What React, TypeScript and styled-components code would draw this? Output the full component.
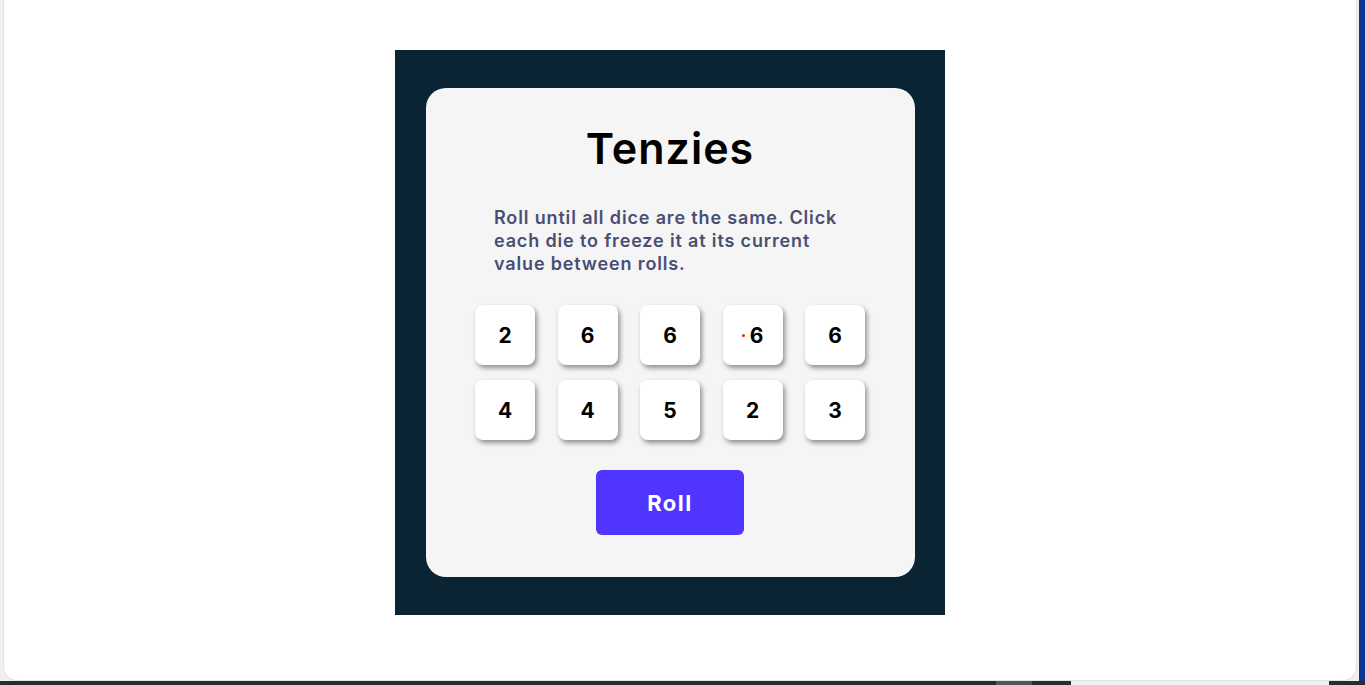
import React from "react";
import styled, { createGlobalStyle } from "styled-components";

const GlobalStyle = createGlobalStyle`
  html, body {
    margin: 0;
    padding: 0;
    background: #2b2b2b;
  }
  * {
    box-sizing: border-box;
  }
`;

const Screen = styled.div`
  display: flex;
  flex-direction: column;
  height: 685px;
  overflow: hidden;
`;

const Window = styled.div`
  flex: 1;
  display: flex;
  background: #f0f0f0;
`;

const Viewport = styled.div`
  flex: 1;
  margin: 0 2px 0 3px;
  background: #ffffff;
  border: 1px solid #e2e2e2;
  border-top: none;
  border-radius: 0 0 14px 14px;
  display: flex;
  justify-content: center;
  padding: 50px 20px 0 0;
`;

const SideStrip = styled.div`
  width: 6px;
  background: #0d3690;
`;

const TaskBar = styled.div`
  height: 4px;
  display: flex;
`;

const TaskSegment = styled.div<{ $w: number; $c: string }>`
  width: ${(p) => p.$w}px;
  flex: ${(p) => (p.$w === 0 ? 1 : "none")};
  background: ${(p) => p.$c};
`;

const Main = styled.main`
  width: 550px;
  height: 565px;
  background: #0b2434;
  display: flex;
  align-items: center;
  justify-content: center;
`;

const Card = styled.div`
  width: 489px;
  height: 489px;
  background: #f5f5f5;
  border-radius: 20px;
  display: flex;
  flex-direction: column;
  align-items: center;
  padding-top: 30px;
  font-family: "Inter", "Noto Sans", sans-serif;
`;

const Title = styled.h1`
  margin: 0;
  font-size: 43px;
  line-height: 60px;
  font-weight: 600;
  letter-spacing: 1px;
  color: #000000;
`;

const Instructions = styled.p`
  margin: 28px 0 0 0;
  width: 352px;
  font-size: 18px;
  line-height: 23px;
  font-weight: 600;
  color: #4a4e74;
  letter-spacing: 0.85px;
`;

const DiceGrid = styled.div`
  margin-top: 30px;
  display: grid;
  grid-template-columns: repeat(5, 60px);
  column-gap: 22.5px;
  row-gap: 15px;
`;

const Die = styled.button`
  width: 60px;
  height: 60px;
  border: none;
  border-radius: 8px;
  background: #ffffff;
  box-shadow: 2px 3px 5px rgba(0, 0, 0, 0.42);
  display: flex;
  align-items: center;
  justify-content: center;
  font-family: "Inter", "Noto Sans", sans-serif;
  font-size: 21px;
  font-weight: 700;
  color: #000000;
  padding: 0;
  cursor: pointer;
`;

const Dot = styled.span`
  width: 3px;
  height: 3px;
  border-radius: 50%;
  background: #ff1a1a;
  margin-right: 5px;
`;

const RollButton = styled.button`
  margin-top: 30px;
  width: 148px;
  height: 65px;
  border: none;
  border-radius: 6px;
  background: #5035ff;
  color: #ffffff;
  font-family: "Inter", "Noto Sans", sans-serif;
  font-size: 22px;
  font-weight: 700;
  letter-spacing: 1.5px;
  cursor: pointer;
`;

const dice = [2, 6, 6, 6, 6, 4, 4, 5, 2, 3];

export default function App() {
  return (
    <>
      <GlobalStyle />
      <Screen>
        <Window>
          <Viewport>
            <Main>
              <Card>
                <Title>Tenzies</Title>
                <Instructions>
                  Roll until all dice are the same. Click each die to freeze it at its current value between rolls.
                </Instructions>
                <DiceGrid>
                  {dice.map((value, i) => (
                    <Die key={i}>
                      {i === 3 && <Dot />}
                      {value}
                    </Die>
                  ))}
                </DiceGrid>
                <RollButton>Roll</RollButton>
              </Card>
            </Main>
          </Viewport>
          <SideStrip />
        </Window>
        <TaskBar>
          <TaskSegment $w={996} $c="#2b2b2b" />
          <TaskSegment $w={36} $c="#555555" />
          <TaskSegment $w={39} $c="#2b2b2b" />
          <TaskSegment $w={258} $c="#efefef" />
          <TaskSegment $w={0} $c="#2b2b2b" />
        </TaskBar>
      </Screen>
    </>
  );
}
